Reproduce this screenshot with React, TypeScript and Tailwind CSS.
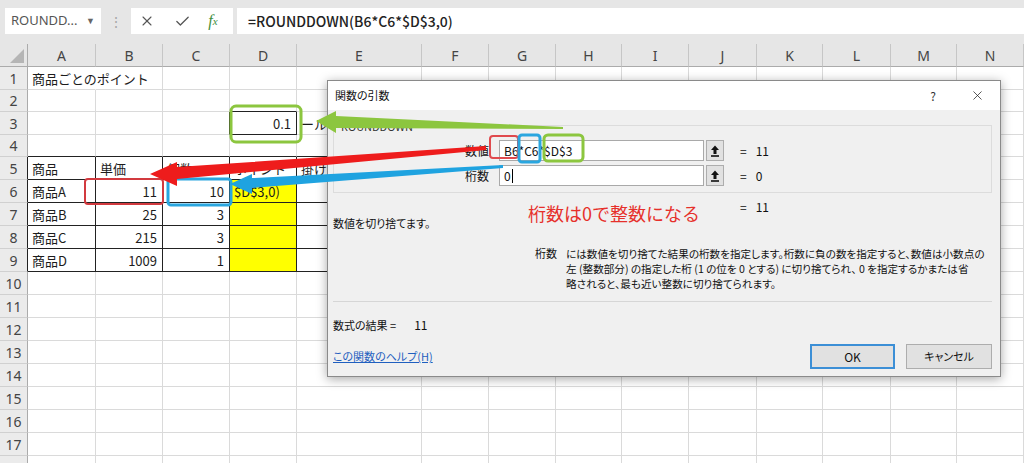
import { X, Check } from "lucide-react";

const COLS = ["A", "B", "C", "D", "E", "F", "G", "H", "I", "J", "K", "L", "M", "N"];

const data: Record<number, Record<string, string>> = {
  1: { A: "商品ごとのポイント" },
  3: { D: "0.1", E: "ールール" },
  5: { A: "商品", B: "単価", C: "個数", D: "ポイント", E: "掛け率" },
  6: { A: "商品A", B: "11", C: "10", D: "$D$3,0)" },
  7: { A: "商品B", B: "25", C: "3" },
  8: { A: "商品C", B: "215", C: "3" },
  9: { A: "商品D", B: "1009", C: "1" },
};

const rightAligned = new Set(["D3", "B6", "B7", "B8", "B9", "C6", "C7", "C8", "C9"]);
const tableCols = new Set(["A", "B", "C", "D", "E"]);

function cellClass(r: number, c: string): string {
  let right = "border-r-[#dadada]";
  let bottom = "border-b-[#dadada]";
  if (r === 4 && tableCols.has(c)) bottom = "border-b-[#222]";
  if (r >= 5 && r <= 9 && tableCols.has(c)) {
    right = "border-r-[#222]";
    bottom = "border-b-[#222]";
  }
  if (r === 3 && (c === "C" || c === "D")) right = "border-r-[#222]";
  if (r === 3 && c === "D") bottom = "border-b-[#222]";
  if (r === 2 && c === "D") bottom = "border-b-[#222]";
  if (r === 1 && c === "A") right = "border-r-transparent";
  const bg = r >= 6 && r <= 9 && c === "D" ? "bg-[#ffff00]" : "";
  const align = rightAligned.has(c + r) ? "justify-end pr-[5px]" : "justify-start pl-[4px]";
  return `border-r border-b ${right} ${bottom} ${bg} ${align} flex items-center whitespace-nowrap overflow-visible`;
}

function rowHeadClass(r: number): string {
  return r >= 5 && r <= 9
    ? "border-r border-b border-r-[#222] border-b-[#d0d0d0] bg-[#ebebeb] flex items-center justify-center text-[14px] text-[#444]"
    : "border-r border-b border-r-[#ababab] border-b-[#d0d0d0] bg-[#ebebeb] flex items-center justify-center text-[14px] text-[#444]";
}

function UpIcon() {
  return (
    <svg width="10" height="12" viewBox="0 0 10 12">
      <path d="M5 0.5 L1 5 H3.5 V9 H6.5 V5 H9 Z" fill="#111" />
      <rect x="1" y="10.2" width="8" height="1.6" fill="#111" />
    </svg>
  );
}

function Sheet() {
  const rows = Array.from({ length: 18 }, (_, i) => i + 1);
  return (
    <div
      className="grid grid-cols-[28px_68px_67px_67px_67px_125px_67px_67px_66px_67px_68px_66px_68px_66px_67px] grid-rows-[23px_23px_22px_23px_22px_repeat(14,23px)] bg-white"
      style={{ fontFamily: "'Noto Sans CJK JP', 'Noto Sans', sans-serif" }}
    >
      <div className="border-r border-b border-r-[#ababab] border-b-[#ababab] bg-[#e6e6e6] flex items-end justify-end p-[3px]">
        <svg width="14" height="14" viewBox="0 0 14 14">
          <path d="M14 0 L14 14 L0 14 Z" fill="#b5b5b5" />
        </svg>
      </div>
      {COLS.map((c) => (
        <div
          key={c}
          className="border-r border-b border-r-[#c6c6c6] border-b-[#ababab] bg-[#e6e6e6] flex items-center justify-center text-[14px] text-[#444]"
          style={{ fontFamily: "'Noto Sans', sans-serif" }}
        >
          {c}
        </div>
      ))}
      {rows.map((r) => (
        <div key={r} className="contents">
          <div className={rowHeadClass(r)} style={{ fontFamily: "'Noto Sans', sans-serif" }}>
            {r < 18 ? r : ""}
          </div>
          {COLS.map((c) => (
            <div key={c + r} className={cellClass(r, c)}>
              <span className="text-[13px] text-[#1c1c1c] leading-none">{data[r]?.[c] ?? ""}</span>
            </div>
          ))}
        </div>
      ))}
    </div>
  );
}

function Toolbar() {
  return (
    <div className="h-[44px] bg-[#e6e6e6] flex items-start pt-[8px]">
      <div
        className="ml-[5px] w-[96px] h-[26px] bg-white flex items-center justify-between pl-[6px] pr-[6px] text-[13px] text-[#555]"
        style={{ fontFamily: "'Noto Sans', sans-serif" }}
      >
        <span>ROUNDD...</span>
        <span className="text-[9px] text-[#666]">▼</span>
      </div>
      <div className="w-[30px] h-[26px] flex items-center justify-center text-[#a8a8a8] text-[14px]">⋮</div>
      <div className="w-[102px] h-[26px] bg-white flex items-center">
        <div className="w-[32px] flex justify-center">
          <X size={16} strokeWidth={1.6} color="#555" />
        </div>
        <div className="w-[38px] flex justify-center">
          <Check size={17} strokeWidth={1.8} color="#555" />
        </div>
        <div
          className="w-[24px] flex justify-center text-[#3f8f3f] italic text-[16px]"
          style={{ fontFamily: "'Liberation Serif', serif" }}
        >
          f<span className="text-[11px] mt-[4px]">x</span>
        </div>
      </div>
      <div
        className="ml-[4px] flex-1 h-[26px] bg-white flex items-center pl-[11px] text-[14px] font-medium text-[#222]"
        style={{ fontFamily: "'Noto Sans CJK JP', sans-serif" }}
      >
        =ROUNDDOWN(B6*C6*$D$3,0)
      </div>
    </div>
  );
}

function Dialog() {
  const f = { fontFamily: "'Noto Sans CJK JP', sans-serif", fontFeatureSettings: "'palt'" };
  return (
    <div
      className="absolute left-[327px] top-[80px] w-[674px] h-[297px] border border-[#8a8a8a] bg-[#f0f0f0] shadow-[0_2px_10px_rgba(0,0,0,0.35)] text-[11px] text-[#111]"
      style={f}
    >
      <div className="h-[29px] bg-white flex items-center justify-between pl-[7px]">
        <span>関数の引数</span>
        <div className="flex items-center">
          <span className="w-[20px] text-center text-[12px] text-[#333]">?</span>
          <div className="w-[24px] ml-[22px] mr-[11px] flex justify-center">
            <X size={15} strokeWidth={1.2} color="#222" />
          </div>
        </div>
      </div>
      <div className="pl-[5px] pr-[8px]">
        <div className="relative mt-[15px] h-[68px] border border-[#dcdcdc]">
          <span className="absolute -top-[8px] left-[6px] px-[1px] bg-[#f0f0f0] text-[11px] text-[#333]">ROUNDDOWN</span>
          <div className="flex items-center mt-[14px] h-[21px]">
            <div className="w-[155px] text-right text-[12px]">数値</div>
            <div className="ml-[10px] w-[205px] h-[21px] bg-white border border-[#a9a9a9] flex items-center pl-[4px] text-[12px]">
              B6*C6*$D$3
            </div>
            <div className="ml-[2px] w-[18px] h-[21px] bg-[#e1e1e1] border border-[#adadad] flex items-center justify-center">
              <UpIcon />
            </div>
            <span className="ml-[16px] text-[12px]">=</span>
            <span className="ml-[9px] text-[12px]">11</span>
          </div>
          <div className="flex items-center mt-[4px] h-[21px]">
            <div className="w-[155px] text-right text-[12px]">桁数</div>
            <div className="ml-[10px] w-[205px] h-[21px] bg-white border border-[#a9a9a9] flex items-center pl-[4px] text-[12px]">
              0<span className="w-px h-[14px] bg-black ml-[1px]" />
            </div>
            <div className="ml-[2px] w-[18px] h-[21px] bg-[#e1e1e1] border border-[#adadad] flex items-center justify-center">
              <UpIcon />
            </div>
            <span className="ml-[16px] text-[12px]">=</span>
            <span className="ml-[9px] text-[12px]">0</span>
          </div>
        </div>
        <div className="flex h-[46px]">
          <div className="w-[195px] shrink-0 pt-[23px] leading-[15px]">数値を切り捨てます。</div>
          <div className="w-[212px] shrink-0 pt-[8px] text-[18px] leading-[24px] text-[#e6302b]" style={{ fontFeatureSettings: "normal" }}>
            桁数は0で整数になる
          </div>
          <div className="pt-[6px] leading-[15px] text-[12px]">
            =<span className="ml-[9px]">11</span>
          </div>
        </div>
        <div className="flex mt-[7px] leading-[15px] text-[10.6px]">
          <div className="ml-[202px] w-[31px] shrink-0 text-[11px]">桁数</div>
          <div className="flex flex-col whitespace-nowrap">
            <span>には数値を切り捨てた結果の桁数を指定します。桁数に負の数を指定すると、数値は小数点の</span>
            <span>左 (整数部分) の指定した桁 (1 の位を 0 とする) に切り捨てられ、 0 を指定するかまたは省</span>
            <span>略されると、最も近い整数に切り捨てられます。</span>
          </div>
        </div>
        <div className="mt-[10px] h-px bg-[#d6d6d6]" />
        <div className="mt-[15px] leading-[15px]">
          数式の結果 =<span className="ml-[18px] text-[12px]">11</span>
        </div>
        <div className="mt-[11px] flex items-center justify-between">
          <span className="text-[#1f5fbf] underline">この関数のヘルプ(H)</span>
          <div className="flex items-center">
            <div className="w-[85px] h-[25px] bg-[#e1e1e1] border-2 border-[#3c8fd6] flex items-center justify-center text-[12px]">
              OK
            </div>
            <div className="ml-[11px] w-[86px] h-[25px] bg-[#e1e1e1] border border-[#adadad] flex items-center justify-center">
              キャンセル
            </div>
          </div>
        </div>
      </div>
    </div>
  );
}

function Annotations() {
  return (
    <svg className="absolute inset-0 pointer-events-none" width="1024" height="463" viewBox="0 0 1024 463">
      <rect x="231" y="106" width="70" height="36" rx="5" fill="none" stroke="#8cc63f" strokeWidth="3" />
      <rect x="85" y="179" width="78" height="25" rx="3" fill="none" stroke="#d23a3f" strokeWidth="2" />
      <rect x="168" y="179" width="63" height="26" rx="3" fill="none" stroke="#2aa6df" strokeWidth="3" />
      <rect x="490" y="136" width="28" height="22" rx="3" fill="none" stroke="#e04a4e" strokeWidth="2" />
      <rect x="519" y="135" width="21" height="27" rx="3" fill="none" stroke="#2aa6df" strokeWidth="3" />
      <rect x="544" y="135" width="39" height="26" rx="4" fill="none" stroke="#8cc63f" strokeWidth="3" />
      <polygon points="316,121 336,111 336,116 563,127 563,129 336,128 336,133" fill="#8cc63f" />
      <polygon points="150,174 177,162 177,167 486,146 486,150 177,179 177,186" fill="#ee1c1c" />
      <polygon points="230,184 252,174 252,178 503,165 503,168 252,188 252,194" fill="#1fa3e0" />
    </svg>
  );
}

export default function App() {
  return (
    <div className="relative w-[1024px] h-[463px] overflow-hidden bg-white">
      <Toolbar />
      <Sheet />
      <Dialog />
      <Annotations />
    </div>
  );
}
